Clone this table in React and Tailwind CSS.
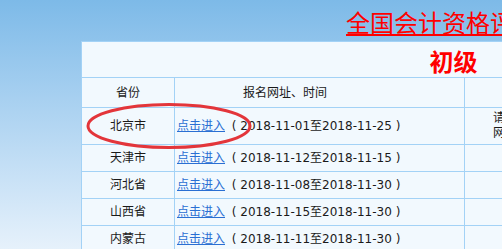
import React from "react";

const rows = [
  { name: "天津市", from: "2018-11-12", to: "2018-11-15" },
  { name: "河北省", from: "2018-11-08", to: "2018-11-30" },
  { name: "山西省", from: "2018-11-15", to: "2018-11-30" },
  { name: "内蒙古", from: "2018-11-11", to: "2018-11-30" },
];

const font = "font-['DejaVu_Sans','Noto_Sans_CJK_SC',sans-serif]";

function Entry({ from, to }) {
  return (
    <span className="whitespace-nowrap">
      <a href="#" className="text-[#2a6fd3] underline">点击进入</a>
      <span className="ml-[3px]"> ( {from}至{to} )</span>
    </span>
  );
}

export default function App() {
  return (
    <div className={`relative w-[502px] h-[249px] overflow-hidden bg-gradient-to-b from-[#7dbae8] to-[#e6f1fb] ${font}`}>
      <div className="pt-[10px] pl-[346px] h-[41px] whitespace-nowrap">
        <a href="#" className="text-[24px] leading-[24px] text-[#ff0000] underline font-['Noto_Sans_CJK_SC',sans-serif]">
          全国会计资格评价网2019年初级会计职称考试报名入口
        </a>
      </div>

      <div className="ml-[81px] w-[744px] border-l border-t border-[#a3d2f6] bg-[#f2f9fe] text-[12px] text-[#1a1a1a]">
        <div className="h-[36px] border-b border-[#a3d2f6] flex items-center justify-center pt-[3px]">
          <span className="text-[24px] leading-[24px] font-bold text-[#ff0000] font-['Noto_Sans_CJK_SC',sans-serif]">初级</span>
        </div>

        <div className="h-[30px] border-b border-[#a3d2f6] flex">
          <div className="w-[93px] border-r border-[#a3d2f6] flex items-center justify-center">省份</div>
          <div className="w-[290px] border-r border-[#a3d2f6] flex items-center pl-[68px]">报名网址、时间</div>
          <div className="flex-1" />
        </div>

        <div className="h-[37px] border-b border-[#a3d2f6] flex">
          <div className="w-[93px] border-r border-[#a3d2f6] flex items-center justify-center">北京市</div>
          <div className="w-[290px] border-r border-[#a3d2f6] flex items-center pl-[2px]">
            <Entry from="2018-11-01" to="2018-11-25" />
          </div>
          <div className="flex-1 flex flex-col justify-center pl-[28px] leading-[15px] whitespace-nowrap">
            <span>请考生登录全国会计资格</span>
            <span>网报名</span>
          </div>
        </div>

        {rows.map((r) => (
          <div key={r.name} className="h-[27px] border-b border-[#a3d2f6] flex">
            <div className="w-[93px] border-r border-[#a3d2f6] flex items-center justify-center">{r.name}</div>
            <div className="w-[290px] border-r border-[#a3d2f6] flex items-center pl-[2px]">
              <Entry from={r.from} to={r.to} />
            </div>
            <div className="flex-1" />
          </div>
        ))}
      </div>

      {/* hand-drawn highlight around the Beijing row */}
      <svg className="absolute left-0 top-0 pointer-events-none" width="502" height="249">
        <ellipse cx="169" cy="126" rx="81" ry="21.5" fill="none" stroke="#e3353a" strokeWidth="3" />
      </svg>
    </div>
  );
}
